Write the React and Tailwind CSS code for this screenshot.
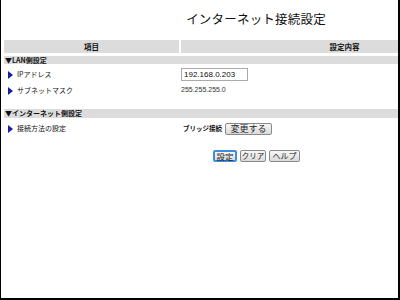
import React from "react";

function Arrow() {
  return (
    <svg width="5" height="8" viewBox="0 0 5 8" className="shrink-0">
      <polygon points="0,0 5,4 0,8" fill="#1a1aa8" />
    </svg>
  );
}

function Btn({ children, focus, className }) {
  return (
    <div
      className={
        "h-[12px] flex items-center justify-center whitespace-nowrap rounded-[2px] leading-none text-[#222] bg-gradient-to-b from-[#f8f8f8] to-[#dadada] " +
        (focus ? "border-2 border-[#3d8ee0] " : "border border-[#8a8a8a] ") +
        className
      }
    >
      {children}
    </div>
  );
}

function Row({ label, children, className }) {
  return (
    <div className={"flex items-center " + className}>
      <div className="w-[177px] flex items-center gap-[4px] pl-[4px] text-[7px] text-[#111]">
        <Arrow />
        <span>{label}</span>
      </div>
      {children}
    </div>
  );
}

export default function App() {
  return (
    <div className="w-[400px] h-[300px] bg-white border-l border-r-2 border-b-2 border-black overflow-hidden font-['Noto_Sans_CJK_JP','Noto_Sans',sans-serif]">
      <div className="w-[505px] pl-[3px] flex flex-col">
        <div className="h-[40px] flex items-center justify-center pl-[2px] pb-[1px]">
          <span className="text-[12.5px] tracking-[0.2px] text-[#111]">インターネット接続設定</span>
        </div>
        <div className="flex gap-[2px] h-[13px] text-[7.5px] font-bold text-[#111]">
          <div className="w-[175px] bg-[#dcdcdc] flex items-center justify-center">項目</div>
          <div className="flex-1 bg-[#dcdcdc] flex items-center justify-center pl-[2px]">設定内容</div>
        </div>
        <div className="mt-[3px] h-[8px] bg-[#dcdcdc] flex items-center pl-[1px] text-[7px] font-bold text-[#111] leading-none">
          ▼LAN側設定
        </div>
        <Row label="IPアドレス" className="h-[17px] mt-[2px]">
          <div className="w-[67px] h-[13px] border border-[#aaa] flex items-center pl-[2px] text-[8px] text-[#111] font-['Liberation_Sans',sans-serif]">
            192.168.0.203
          </div>
        </Row>
        <Row label="サブネットマスク" className="h-[15px]">
          <div className="text-[7px] text-[#333] font-['Liberation_Sans',sans-serif]">255.255.255.0</div>
        </Row>
        <div className="mt-[11px] h-[9px] bg-[#dcdcdc] flex items-center pl-[1px] text-[7px] font-bold text-[#111] leading-none">
          ▼インターネット側設定
        </div>
        <Row label="接続方法の設定" className="h-[15px] mt-[3px]">
          <div className="flex items-center gap-[3px] pl-[2px]">
            <span className="text-[6.5px] font-bold text-[#111]">ブリッジ接続</span>
            <Btn className="w-[47px] text-[9px]">変更する</Btn>
          </div>
        </Row>
        <div className="flex mt-[14px] pl-[209px] gap-[3px]">
          <Btn focus className="w-[24px] text-[8.5px]">設定</Btn>
          <Btn className="w-[26px] text-[7.5px]">クリア</Btn>
          <Btn className="w-[31px] text-[8px]">ヘルプ</Btn>
        </div>
      </div>
    </div>
  );
}
